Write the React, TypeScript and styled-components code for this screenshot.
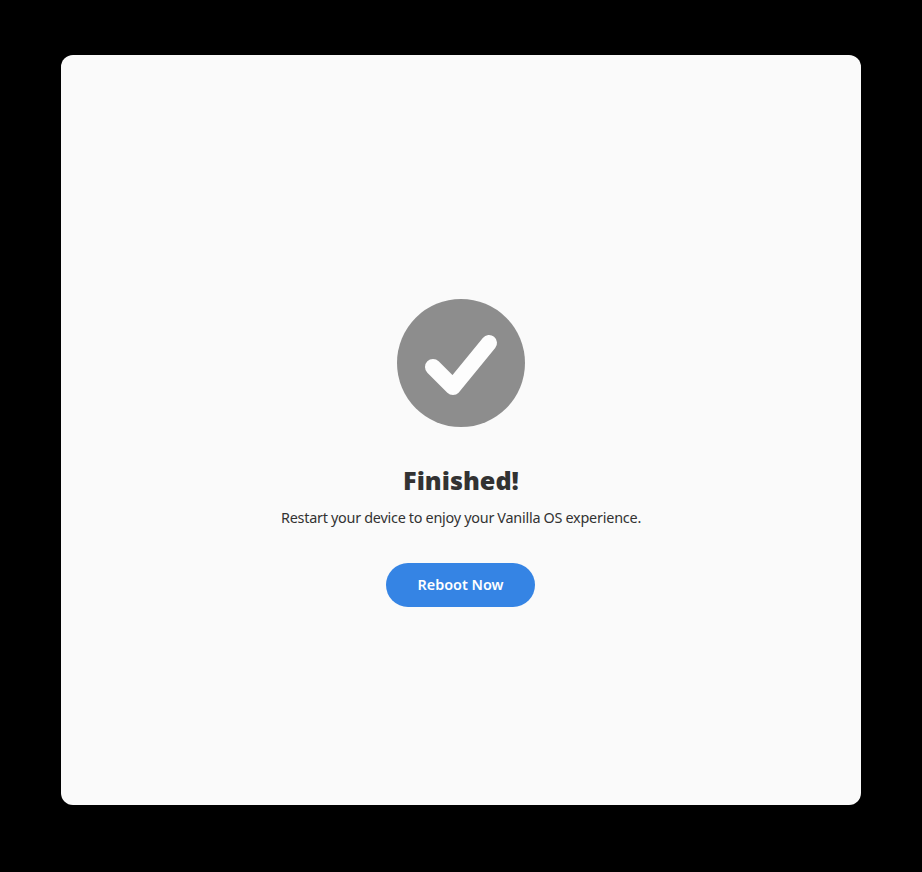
import React from 'react';
import styled, { createGlobalStyle } from 'styled-components';

const GlobalStyle = createGlobalStyle`
  body { margin: 0; background: #000; }
`;

const Backdrop = styled.main`
  box-sizing: border-box;
  height: 872px;
  width: 922px;
  padding: 55px 61px 67px;
  background: #000;
  font-family: 'Noto Sans', sans-serif;
`;

const Window = styled.section`
  box-sizing: border-box;
  height: 750px;
  padding-top: 244px;
  border-radius: 12px;
  background: #fafafa;
  color: #323232;
  display: flex;
  flex-direction: column;
  align-items: center;
`;

const StatusIcon = styled.svg`
  display: block;
  width: 128px;
  height: 128px;
`;

const Title = styled.h1`
  margin: 35px 0 0;
  font-family: 'Open Sans', 'Noto Sans', sans-serif;
  font-size: 25.2px;
  line-height: 36px;
  font-weight: 800;
  white-space: nowrap;
`;

const Description = styled.p`
  margin: 10px 0 0;
  font-size: 14.4px;
  line-height: 20px;
  letter-spacing: -0.22px;
  word-spacing: -0.3px;
  white-space: nowrap;
`;

const PillButton = styled.button`
  margin: 35px 1px 0 0;
  padding: 0;
  width: 149px;
  height: 44px;
  border: 0;
  border-radius: 22px;
  background: #3584e4;
  color: #fff;
  font: 600 14.4px/44px 'Noto Sans', sans-serif;
  white-space: nowrap;
`;

export default function App() {
  return (
    <Backdrop>
      <GlobalStyle />
      <Window>
        <StatusIcon viewBox="0 0 128 128" aria-hidden="true">
          <circle cx="64" cy="64" r="64" fill="#8d8d8d" />
          <path d="M36 68 56 88 92 44" fill="none" stroke="#fdfdfd" strokeWidth="16" strokeLinecap="round" strokeLinejoin="round" />
        </StatusIcon>
        <Title>Finished!</Title>
        <Description>Restart your device to enjoy your Vanilla OS experience.</Description>
        <PillButton type="button">Reboot Now</PillButton>
      </Window>
    </Backdrop>
  );
}
